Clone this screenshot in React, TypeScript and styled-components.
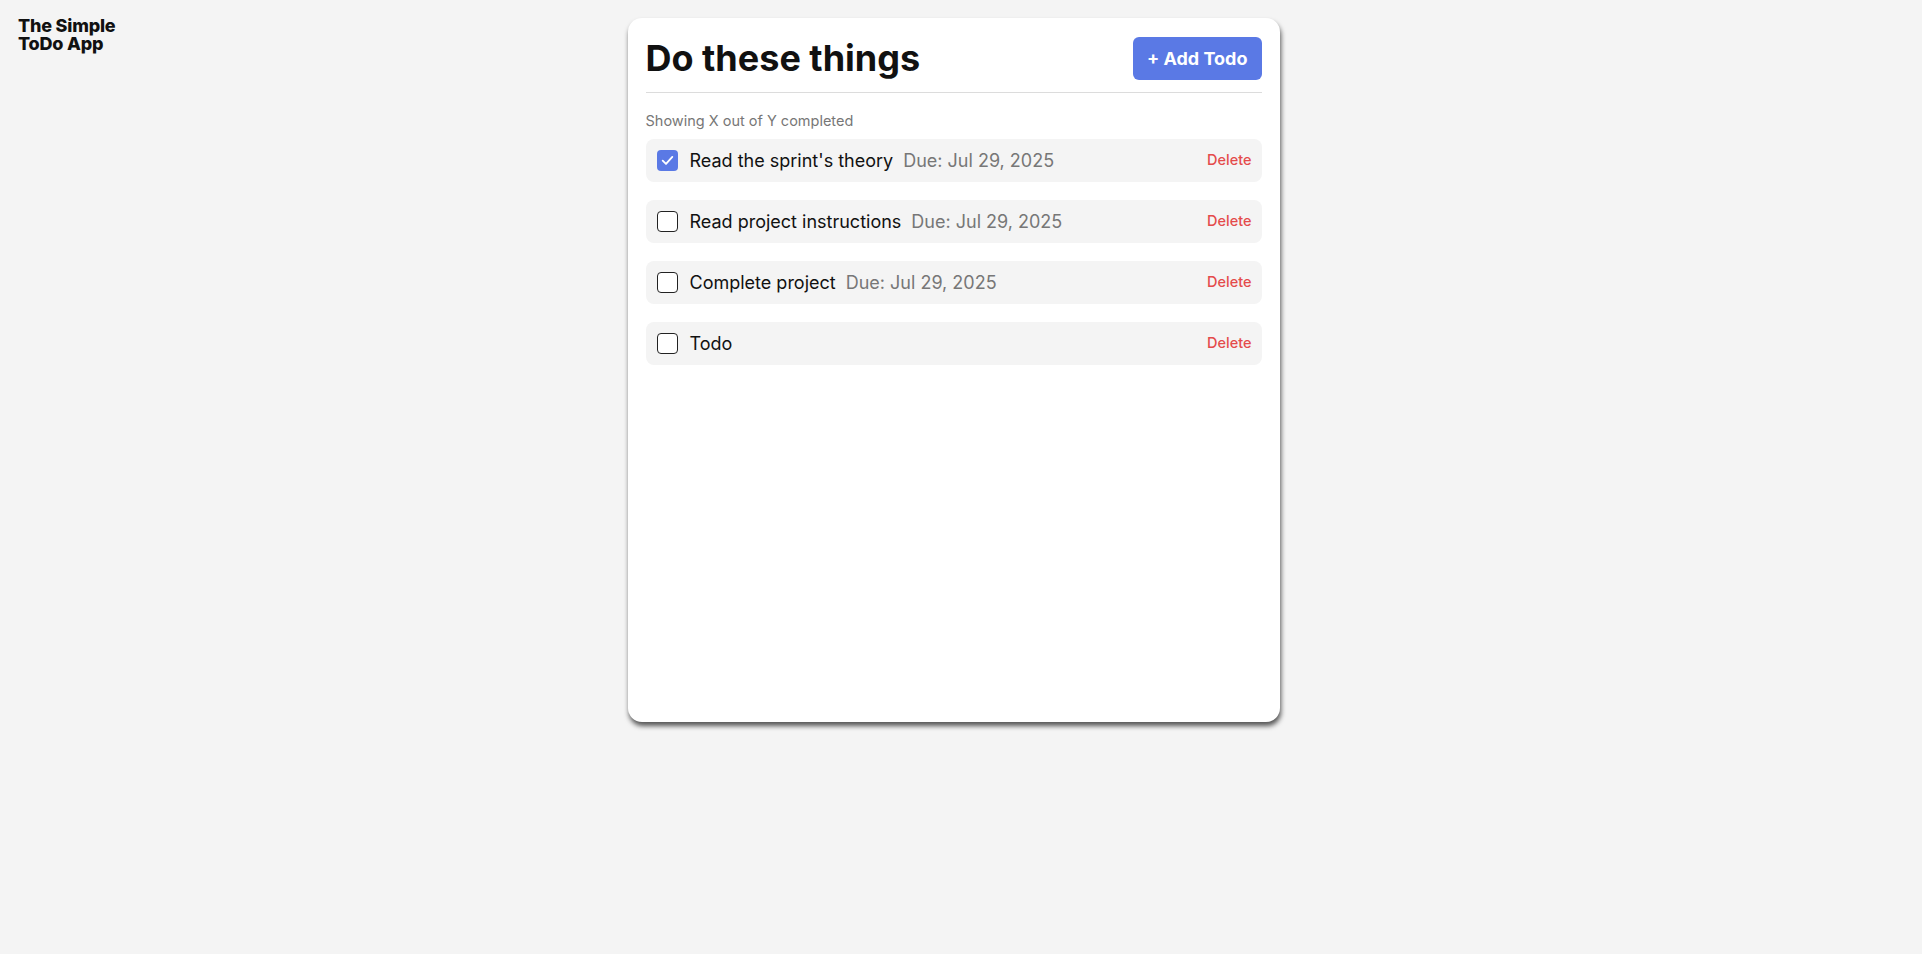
import styled, { createGlobalStyle } from 'styled-components';
import { useState } from 'react';

const GlobalStyle = createGlobalStyle`
  html, body {
    margin: 0;
    padding: 0;
    background: #f4f4f4;
    font-family: Inter, "Noto Sans", "Liberation Sans", sans-serif;
    color: #111;
  }
  * {
    box-sizing: border-box;
  }
`;

const Page = styled.div`
  display: grid;
  grid-template-columns: 1fr 652px 1fr;
  align-items: start;
  min-height: 100vh;
  box-sizing: content-box;
  padding: 18px 33px 17px 18px;
`;

const Logo = styled.h1`
  margin: -1px 0 0;
  font-size: 18px;
  font-weight: 800;
  line-height: 18px;
  letter-spacing: -0.2px;
  color: #111;
`;

const Card = styled.main`
  background: #fff;
  border-radius: 14px;
  height: 704px;
  padding: 19px 18px;
  box-shadow: 1px 4px 5px rgba(0, 0, 0, 0.65);
  display: flex;
  flex-direction: column;
`;

const Header = styled.header`
  display: flex;
  align-items: center;
  justify-content: space-between;
  padding-bottom: 12px;
  border-bottom: 1px solid #dcdcdc;
`;

const Title = styled.h2`
  margin: 0;
  font-size: 36px;
  font-weight: 700;
  line-height: 43px;
  color: #111;
`;

const AddButton = styled.button`
  background: #5a79e5;
  color: #fff;
  border: none;
  border-radius: 6px;
  height: 43px;
  padding: 0 14px;
  font-family: inherit;
  font-size: 18px;
  font-weight: 700;
  cursor: pointer;
`;

const Summary = styled.p`
  margin: 19px 0 10px;
  font-size: 14.5px;
  line-height: 17px;
  color: #777;
`;

const List = styled.ul`
  list-style: none;
  margin: 0;
  padding: 0;
  display: flex;
  flex-direction: column;
  gap: 18px;
`;

const Row = styled.li`
  display: flex;
  align-items: center;
  height: 43px;
  padding: 0 10px 0 11px;
  background: #f4f4f4;
  border-radius: 8px;
`;

const Box = styled.span<{ checked: boolean }>`
  flex: none;
  width: 21px;
  height: 21px;
  border-radius: 4px;
  border: ${({ checked }) => (checked ? 'none' : '1.5px solid #222')};
  background: ${({ checked }) => (checked ? '#5a79e5' : '#fff')};
  display: inline-flex;
  align-items: center;
  justify-content: center;
  cursor: pointer;
  margin-right: 12px;
`;

const Name = styled.span`
  font-size: 18px;
  color: #111;
`;

const Due = styled.span`
  font-size: 18px;
  color: #777;
  margin-left: 10px;
`;

const DeleteButton = styled.button`
  margin-left: auto;
  background: none;
  border: none;
  padding: 0;
  margin-top: -3px;
  color: #e44b4b;
  font-family: inherit;
  font-size: 14.5px;
  font-weight: 500;
  cursor: pointer;
`;

type Todo = { id: number; name: string; due?: string; done: boolean };

const initial: Todo[] = [
  { id: 1, name: "Read the sprint's theory", due: 'Jul 29, 2025', done: true },
  { id: 2, name: 'Read project instructions', due: 'Jul 29, 2025', done: false },
  { id: 3, name: 'Complete project', due: 'Jul 29, 2025', done: false },
  { id: 4, name: 'Todo', done: false },
];

const App = () => {
  const [todos, setTodos] = useState(initial);

  const toggle = (id: number) =>
    setTodos((list) => list.map((t) => (t.id === id ? { ...t, done: !t.done } : t)));

  const remove = (id: number) => setTodos((list) => list.filter((t) => t.id !== id));

  return (
    <>
      <GlobalStyle />
      <Page>
        <Logo>
          The Simple
          <br />
          ToDo App
        </Logo>
        <Card>
          <Header>
            <Title>Do these things</Title>
            <AddButton>+ Add Todo</AddButton>
          </Header>
          <Summary>Showing X out of Y completed</Summary>
          <List>
            {todos.map((todo) => (
              <Row key={todo.id}>
                <Box checked={todo.done} onClick={() => toggle(todo.id)} role="checkbox" aria-checked={todo.done}>
                  {todo.done && (
                    <svg width="15" height="15" viewBox="0 0 14 14" fill="none">
                      <path d="M2.5 7.2 5.6 10.2 11.5 3.6" stroke="#fff" strokeWidth="1.7" strokeLinecap="round" strokeLinejoin="round" />
                    </svg>
                  )}
                </Box>
                <Name>{todo.name}</Name>
                {todo.due && <Due>Due: {todo.due}</Due>}
                <DeleteButton onClick={() => remove(todo.id)}>Delete</DeleteButton>
              </Row>
            ))}
          </List>
        </Card>
        <div />
      </Page>
    </>
  );
};

export default App;
